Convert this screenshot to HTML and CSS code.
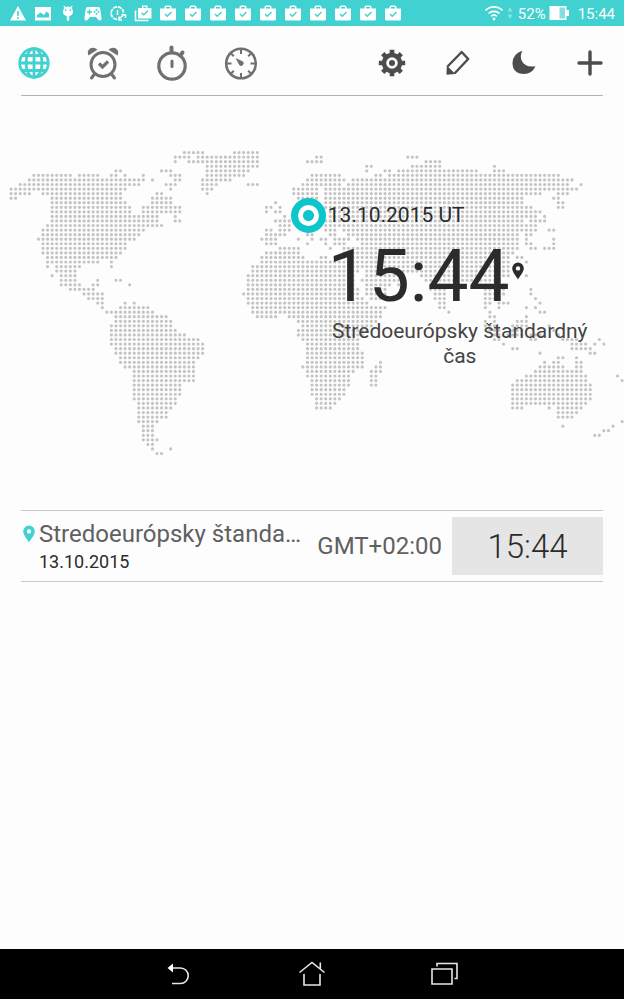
FILE: index.html
```
<!DOCTYPE html>
<html lang="sk">
<head>
  <meta charset="utf-8">
  <meta name="viewport" content="width=device-width, initial-scale=1">
  <title>Hodiny</title>
  <link rel="stylesheet" href="styles.css">
</head>
<body>
  <svg class="sprite">
    <symbol id="bag" viewBox="0 0 18 18">
      <path fill="currentColor" fill-rule="evenodd" d="M5.500 4.500V3.200Q5.500 1.500 7.200 1.500h3.600Q12.500 1.500 12.500 3.200V4.500H17v10.500q0 1.500-1.500 1.500H2.500Q1 16.500 1 15V4.500zM7 4.500h4V3H7zM5.500 10.500l2.800 2.700 4.700-4.600-1-1-3.700 3.600-1.800-1.700z"/>
    </symbol>
    <symbol id="pin" viewBox="0 0 12 18">
      <path fill="currentColor" fill-rule="evenodd" d="M6 0.500a5.800 5.800 0 0 1 5.800 5.800C11.800 10 8 14 6 17.500 4 14 0.200 10 0.200 6.300A5.800 5.800 0 0 1 6 0.500zM6 4.200a2.200 2.200 0 1 0 0 4.400 2.200 2.200 0 0 0 0-4.400z"/>
    </symbol>
  </svg>

  <div class="status-bar">
    <div class="notifications">
      <svg viewBox="0 0 18 18"><path fill="currentColor" fill-rule="evenodd" d="M9 2L17 16.500H1zM8.200 7v5h1.600V7zM8.200 13v1.700h1.600V13z"/></svg>
      <svg viewBox="0 0 18 18"><path fill="currentColor" fill-rule="evenodd" d="M1 3h16v13.500H1zM3 13.500h12V9.500L12.500 7.500 10 11 6.500 8.500l-3.500 2.500z"/></svg>
      <svg viewBox="0 0 18 18"><path fill="currentColor" fill-rule="evenodd" d="M5 1.500l1.500 1.600a6 6 0 0 1 5 0L13 1.500l.7.7L12.500 4Q14 5.500 14 7.500q0 4-3.800 4.500v3.500l-1.200 2-1.200-2v-3.500Q4 11.500 4 7.500q0-2 1.500-3.500L4.300 2.200zM6.700 5.200a.9.900 0 1 0 0 1.800.9.900 0 0 0 0-1.800zM11.300 5.200a.9.900 0 1 0 0 1.800.9.900 0 0 0 0-1.800z"/></svg>
      <svg viewBox="0 0 18 18"><path fill="currentColor" d="M4 3h10q2 0 2.300 2L17.500 14q.2 2.500-1.500 2.500-1 0-2-1L12 13H6l-2 2.500q-1 1-2 1Q.3 16.500.5 14L1.700 5Q2 3 4 3z"/><path class="cut" d="M5.500 5.500v5M3 8h5"/><g class="hole"><circle cx="12.500" cy="5.700" r="1"/><circle cx="12.500" cy="9.700" r="1"/><circle cx="10.500" cy="7.700" r="1"/><circle cx="14.500" cy="7.700" r="1"/></g></svg>
      <svg viewBox="0 0 18 18" fill="none" stroke="currentColor" stroke-width="1.800"><path d="M8 15.300A6.200 6.200 0 1 1 14.500 8.500" stroke-dasharray="4 .8"/><path d="M8.500 6v5M10 15l5-4.500M12.500 10.500l4 .5v3M10 12.500V16h3" stroke-width="1.500"/></svg>
      <svg viewBox="0 0 18 18"><path d="M1.500 6.500v10h13" fill="none" stroke="currentColor" stroke-width="1.600"/><path fill="currentColor" fill-rule="evenodd" d="M8 4V1.500h5.500v2.500H17.500v10.500H4V4zM9.300 4h2.900V2.800H9.300zM7.200 9.200l2.500 2.600 4.700-4.600-1-1-3.700 3.600L8.200 8.200z"/></svg>
      <svg><use href="#bag"/></svg>
      <svg><use href="#bag"/></svg>
      <svg><use href="#bag"/></svg>
      <svg><use href="#bag"/></svg>
      <svg><use href="#bag"/></svg>
      <svg><use href="#bag"/></svg>
      <svg><use href="#bag"/></svg>
      <svg><use href="#bag"/></svg>
      <svg><use href="#bag"/></svg>
      <svg><use href="#bag"/></svg>
    </div>
    <div class="system">
      <svg class="wifi" viewBox="0 0 20 18" fill="none" stroke="currentColor" stroke-width="1.700"><path d="M1.500 6.500a12 12 0 0 1 17 0M4.500 9.500a8 8 0 0 1 11 0M7.200 12.300a4 4 0 0 1 5.600 0"/><circle cx="10" cy="15" r="1.400" fill="currentColor" stroke="none"/></svg>
      <svg class="traffic" viewBox="0 0 6 14" fill="currentColor"><path d="M0.500 5.500L3 1l2.500 4.500zM0.500 8.500h5L3 13z"/></svg>
      <span>52%</span>
      <svg class="battery" viewBox="0 0 21 16"><path d="M.5 1h17v4h2.500v6h-2.500v4H.5z" fill="#fff"/><path d="M10.500 2.500h5.500v11h-5.500z" fill="#80dfdf"/></svg>
      <span class="time">15:44</span>
    </div>
  </div>

  <div class="toolbar">
    <div class="tabs">
      <button class="tab active" aria-label="Svetový čas">
        <svg viewBox="0 0 36 36" fill="none" stroke="currentColor" stroke-width="2.800"><circle cx="18" cy="18" r="14.300"/><path d="M18 3v30M3 18h30M5.500 10.500h25M5.500 25.500h25"/><ellipse cx="18" cy="18" rx="8" ry="14.300"/></svg>
      </button>
      <button class="tab" aria-label="Budík">
        <svg viewBox="0 0 36 36" fill="none" stroke="currentColor" stroke-width="3"><circle cx="18" cy="19.500" r="12"/><path d="M9.500 29l-3 4M26.500 29l3 4" stroke-linecap="round"/><path d="M14 18.500l3.500 3.500 5.500-5.500" stroke-width="3.200"/><path stroke="none" fill="currentColor" d="M3.500 10.500Q1.500 6 5 3.500q4-2 7.500 1.200zM32.500 10.500Q34.500 6 31 3.500q-4-2-7.500 1.200z"/></svg>
      </button>
      <button class="tab" aria-label="Stopky">
        <svg viewBox="0 0 36 36" fill="none" stroke="currentColor" stroke-width="3.200" stroke-linecap="round"><circle cx="18" cy="21" r="13.200"/><path d="M18 16v5.500" stroke-width="3"/><path d="M17.500 2.500V7M28.500 7.500l-2 3" stroke-width="4"/></svg>
      </button>
      <button class="tab" aria-label="Časovač">
        <svg viewBox="0 0 36 36" fill="none" stroke="currentColor"><circle cx="18" cy="18.500" r="14.800" stroke-width="2.600"/><path stroke-width="2" d="M18 4v5M18 33v-5M3.500 18.500h5M32.500 18.500h-5M7.800 8.300l3 3M28.200 8.300l-3 3M7.800 28.700l3-3M28.200 28.700l-3-3"/><path stroke="none" fill="currentColor" d="M12.500 13l7.500 3.500a2.300 2.300 0 1 1-3.700 3.500z"/></svg>
      </button>
    </div>
    <div class="actions">
      <button class="action" aria-label="Nastavenia">
        <svg viewBox="0 0 30 30"><g fill="none" stroke="currentColor"><circle cx="15" cy="15" r="8" stroke-width="4.500"/><g stroke-width="4.600"><path d="M15 1.800v5M15 28.200v-5M1.800 15h5M28.200 15h-5M5.700 5.700l3.500 3.500M24.300 5.700l-3.500 3.500M5.700 24.300l3.500-3.500M24.300 24.300l-3.500-3.500"/></g></g><circle cx="15" cy="15" r="3" fill="currentColor"/></svg>
      </button>
      <button class="action" aria-label="Upraviť">
        <svg viewBox="0 0 30 30"><path d="M4.500 18.500L18.700 4l6.500 7L11.500 25.500" fill="none" stroke="currentColor" stroke-width="2.400" stroke-linejoin="round"/><path fill="currentColor" d="M3.800 17.500l8.500 8.500-8.800.7z"/></svg>
      </button>
      <button class="action" aria-label="Nočný režim">
        <svg viewBox="0 0 30 30"><path fill="currentColor" d="M13.500 2.800C9 10 13.500 20.500 26.500 18.300Q23 26 15 26 3.500 25.500 3.500 15 4 5.500 13.500 2.800z"/></svg>
      </button>
      <button class="action" aria-label="Pridať">
        <svg viewBox="0 0 30 30"><path d="M15 4v22M4 15h22" stroke="currentColor" stroke-width="3.400" stroke-linecap="round"/></svg>
      </button>
    </div>
  </div>

  <div class="map">
    <svg class="world" viewBox="-2.430 -1 136.840 69"><path id="dots" d=""/></svg>
    <div class="place">
      <div class="place-head">
        <span class="marker"></span>
        <span class="date">13.10.2015 UT</span>
      </div>
      <div class="place-body">
        <div class="place-time">15:44<svg class="pin"><use href="#pin"/></svg></div>
        <div class="place-name">Stredoeurópsky štandardný čas</div>
      </div>
    </div>
  </div>

  <div class="zones">
    <div class="zone">
      <svg class="pin"><use href="#pin"/></svg>
      <div class="zone-info">
        <div class="zone-name">Stredoeurópsky štandardný čas</div>
        <div class="zone-date">13.10.2015</div>
      </div>
      <div class="zone-offset">GMT+02:00</div>
      <div class="zone-time">15:44</div>
    </div>
  </div>

  <div class="nav-bar">
    <button aria-label="Späť"><svg viewBox="0 0 30 30"><path d="M8 9h8.500a7.700 7.700 0 0 1 0 15.500H8"/><path d="M3.500 9L9 4.500v9z" fill="#fff" stroke="none"/></svg></button>
    <button aria-label="Domov"><svg viewBox="0 0 30 30"><path d="M2.500 13.500L15 3.500l12.500 10M23.300 9.500V3.500M7 15v11h16V15"/></svg></button>
    <button aria-label="Posledné aplikácie"><svg viewBox="0 0 30 30"><path d="M2 10h20v15H2zM7 7.500V4.500h20v15h-2.500"/></svg></button>
  </div>

  <script src="map.js"></script>
</body>
</html>
```

FILE: styles.css
```
* {
  box-sizing: border-box;
}
body {
  display: flex;
  flex-direction: column;
  min-height: 100vh;
  margin: 0;
  background-color: #fdfdfd;
  color: #2b2b2b;
  font-family: Roboto, "Noto Sans", sans-serif;
}
button {
  display: flex;
  padding: 0;
  border: none;
  background: none;
  color: inherit;
  cursor: pointer;
}
.sprite {
  position: absolute;
  width: 0;
  height: 0;
}
.status-bar {
  display: flex;
  justify-content: space-between;
  align-items: center;
  height: 26px;
  padding: 0 9px;
  background-color: #41d1d1;
  color: #fff;
  font-size: 15px;
}
.notifications {
  display: flex;
  gap: 7px;
}
.notifications svg {
  width: 18px;
  height: 18px;
}
.notifications .cut {
  stroke: #41d1d1;
  stroke-width: 1.5;
}
.notifications .hole {
  fill: #41d1d1;
}
.system {
  display: flex;
  align-items: center;
  gap: 3px;
}
.wifi {
  width: 20px;
  height: 18px;
}
.traffic {
  width: 6px;
  height: 14px;
  opacity: 0.4;
}
.system span {
  margin-left: 2px;
  padding-top: 2px;
}
.system .time {
  margin-left: 5px;
}
.battery {
  width: 21px;
  height: 16px;
}
.toolbar {
  display: flex;
  justify-content: space-between;
  align-items: center;
  height: 70px;
  margin: 0 21px;
  padding-top: 5px;
  border-bottom: 1px solid #b4b4b4;
}
.tabs {
  display: flex;
  gap: 33px;
  margin-left: -5px;
  color: #707070;
}
.tab svg {
  width: 36px;
  height: 36px;
}
.tab.active {
  color: #41d1d1;
}
.actions {
  display: flex;
  gap: 36px;
  margin-right: -2px;
  color: #4c4c4c;
}
.action svg {
  width: 30px;
  height: 30px;
}
.map {
  position: relative;
  padding: 52px 0 47px;
}
.world {
  display: block;
  width: 100%;
}
.world path {
  fill: none;
  stroke: #c4c4c4;
  stroke-width: 0.7;
  stroke-linecap: round;
  stroke-dasharray: 0 1;
}
/* pinned to the location on the map */
.place {
  position: absolute;
  left: 46.6%;
  top: 102px;
}
.place-head {
  display: flex;
  align-items: center;
  gap: 2px;
}
.marker {
  width: 35px;
  height: 35px;
  border: 7px solid #0cc6cb;
  border-radius: 50%;
  background: radial-gradient(circle, #0cc6cb 5px, #fff 6px);
}
.date {
  padding-bottom: 2px;
  font-size: 21px;
}
.place-body {
  width: 264px;
  margin-left: 37px;
}
.place-time {
  display: flex;
  align-items: center;
  font-size: 73px;
  line-height: 86px;
}
.place-time .pin {
  width: 12px;
  height: 18px;
  margin: 0 0 10px 2px;
}
.place-name {
  color: #444;
  font-size: 21px;
  line-height: 25px;
  text-align: center;
}
.zones {
  flex: 1;
  margin: 0 21px;
}
.zone {
  display: flex;
  align-items: center;
  height: 72px;
  border-top: 1px solid #c8c8c8;
  border-bottom: 1px solid #c8c8c8;
}
.zone .pin {
  flex-shrink: 0;
  width: 12px;
  height: 18px;
  margin: 0 4px 24px 2px;
  color: #41d1d1;
}
.zone-info {
  flex: 1;
  min-width: 0;
}
.zone-name {
  overflow: hidden;
  color: #606060;
  font-size: 24px;
  line-height: 32px;
  text-overflow: ellipsis;
  white-space: nowrap;
}
.zone-date {
  font-size: 18px;
  line-height: 24px;
}
.zone-offset {
  margin: 0 10px 0 12px;
  color: #606060;
  font-size: 24px;
}
.zone-time {
  width: 151px;
  padding-top: 2px;
  background-color: #e5e5e5;
  font-size: 33px;
  font-weight: 300;
  line-height: 56px;
  text-align: center;
}
.nav-bar {
  display: flex;
  justify-content: center;
  align-items: center;
  gap: 103px;
  height: 50px;
  background-color: #000;
}
.nav-bar svg {
  width: 30px;
  height: 30px;
  fill: none;
  stroke: #e6e6e6;
  stroke-width: 1.6;
}
```

FILE: map.js
```
// land cells of the dotted map, one line per row, as column ranges
var rows = [
  '38-42 49-54',
  '36-39 41-54 67-68 87-89',
  '36 39-43 44-54 65-68 91-94',
  '43-54 78-79 88-94 106',
  '23-24 33-35 43-52 78 82-83 85-102 106-108',
  '5-13 15-19 22-23 25 29 35-37 43-51 66-72 80-81 83-120',
  '4-29 31 36-37 42-48 65-73 75-123',
  '2-28 34-36 42-45 52-54 64-72 74-122 125',
  '0-25 35 42-44 62-67 69-124',
  '0-4 7-24 32-33 43 62-64 65-67 69-116 120-122',
  '0-1 9-24 31-35 63-67 69-112 119-120',
  '9-25 31-35 58 69-112 120-121',
  '9-26 29-37 56-57 59 69-114 120-121',
  '9-26 29-37 56 58-59 70-116',
  '9-32 36 60 70-115 117',
  '9-32 36-37 58-61 69-112 114-117',
  '8-33 59-61 69-115',
  '7-29 56-57 59-61 69-71 73-115 118-119',
  '7-28 56-60 65-66 70-71 74-111 113-114',
  '6-27 55-58 63 66 68-69 71-74 76-111 113 119',
  '7-25 56-58 65 69 71-73 77-111 113-114 119',
  '7-25 59-63 70 73-111 114-115 117-119',
  '7-24 56-57 58-63 73-110',
  '8-23 55-64 68-69 71-109 111-112',
  '8-19 22 55-109 113',
  '8 10-15 22 53-109',
  '10-14 53-76 78-109',
  '9 11-14 52-75 78-86 90-109 113',
  '11-14 19 23-24 52-75 77-86 91-107',
  '11-15 18-19 26 52-75 78-83 85-86 92-97 102-108',
  '13-18 52-76 78-82 92-95 104-108 114',
  '16-20 51-76 78-82 93-95 104-108 114',
  '17-20 52-77 79-81 93-95 104-107 115',
  '19-20 25 27 52-78 94-95 104-105 107-109 116',
  '20 24-30 53-82 94-95 104 107 113 115',
  '21-31 53-81 96 105 116-117',
  '23-34 54-58 61-81 105-106 113',
  '23-35 63-80 104 106 111-113',
  '22-35 64-79 104-106 110-113 118',
  '22-36 63-78 105-107 110-112 119',
  '22-38 63-77 106-107 109-112 114-116 120',
  '22-41 64-76 106-107 114-115 121-124 129',
  '22-42 65-76 108 123-126 128 130',
  '23-42 65-76 110-111 123-127',
  '23-42 65-77 116 127-128',
  '24-41 65-77 120-121 124',
  '24-40 65-77 81 117 119-120 124-125',
  '25-40 64-77 80-81 116-121 124-125',
  '27-40 65-75 79-81 115-125',
  '27-40 65-74 79-80 113-126 133',
  '27-40 66-74 79-80 111-126 134',
  '27-37 66-74 79-80 110-127',
  '27-37 66-73 110-127',
  '27-37 66-73 110-127',
  '27-36 67-72 110-127',
  '28-36 67-71 110-126',
  '28-35 67-70 110-112 118 120-125',
  '28-34 120-124',
  '28-34 120-123',
  '28-32 134',
  '29-31 121 132',
  '29-31 130-131',
  '29-31 128-129',
  '29-32',
  '30-31',
  '31 35',
  '32-33'
];

var path = '';
rows.forEach(function (row, y) {
  row.split(' ').forEach(function (range) {
    var ends = range.split('-').map(Number);
    var last = ends.length > 1 ? ends[1] : ends[0];
    path += 'M' + ends[0] + ' ' + y + 'H' + (last + 0.1);
  });
});
document.getElementById('dots').setAttribute('d', path);
```
